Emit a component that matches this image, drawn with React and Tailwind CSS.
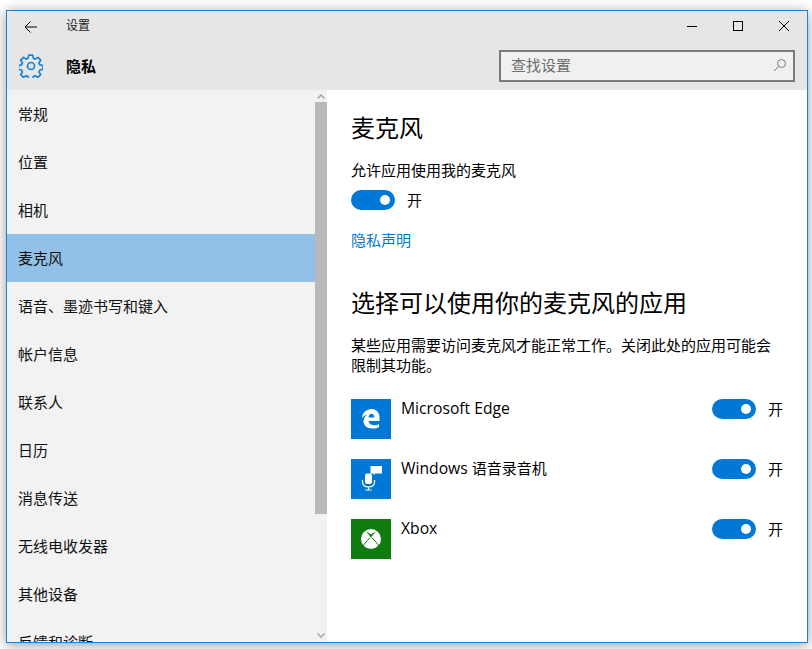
import React from 'react'

const FONT = "font-['Open_Sans','Noto_Sans_CJK_SC',sans-serif]"

const menuItems = ['常规', '位置', '相机', '麦克风', '语音、墨迹书写和键入', '帐户信息', '联系人', '日历', '消息传送', '无线电收发器', '其他设备', '反馈和诊断']

const Toggle = () => (
  <div className='flex items-center'>
    <div className='w-11 h-5 rounded-full bg-[#0078d7] flex items-center justify-end pr-[5px]'>
      <div className='w-2.5 h-2.5 rounded-full bg-white'></div>
    </div>
    <span className='ml-3 text-[15px] leading-5 text-black'>开</span>
  </div>
)

const EdgeIcon = () => (
  <svg viewBox='0 0 40 40' className='w-10 h-10'>
    <rect width='40' height='40' fill='#0078d7' />
    <path
      d='M11 19C11.500 13.500 15.500 10 20.500 10C25.500 10 28.500 14 28.500 18.500V22H17.500C18 25 20.500 26.300 23.500 26.300C25 26.300 27 25.800 28 25V28C26.500 29 24.500 29.500 22 29.500C15.500 29.500 12 26 12.500 21.500C13 18.500 14.500 16.500 16.500 15.500C14.500 16 12.500 17 11 19zM17.500 18.500H23.300C23.300 16 22 14.800 20.500 14.800C19 14.800 17.800 16.300 17.500 18.500z'
      fill='#fff'
      fillRule='evenodd'
    />
  </svg>
)

const RecorderIcon = () => (
  <svg viewBox='0 0 40 40' className='w-10 h-10'>
    <rect width='40' height='40' fill='#0078d7' />
    <path d='M19.500 7h11.500v7.500h-6.500l-2 1.500v-1.500h-3z' fill='#fff' />
    <rect x='14' y='14.500' width='7' height='10.500' rx='2' fill='#fff' />
    <path d='M11.500 21v2c0 3.300 2.500 5 6 5s6-1.700 6-5v-2M17.500 28v3M14.500 31h6' fill='none' stroke='#fff' strokeWidth='1.200' />
  </svg>
)

const XboxIcon = () => (
  <svg viewBox='0 0 40 40' className='w-10 h-10'>
    <rect width='40' height='40' fill='#107c10' />
    <circle cx='20' cy='20' r='10' fill='#fff' />
    <path d='M15 12.500Q17.500 13.500 20 15.500Q22.500 13.500 25 12.500Q22 15.500 20 19Q18 15.500 15 12.500z' fill='#107c10' />
    <path d='M19 19C16 21.500 13.500 24.500 12 27.500M21 19C24 21.500 26.500 24.500 28 27.500' fill='none' stroke='#107c10' strokeWidth='1' />
  </svg>
)

const GearIcon = () => (
  <svg viewBox='0 0 24 24' className='w-6 h-6' fill='none' stroke='#1883d7' strokeWidth='1.700' strokeLinejoin='round'>
    <circle cx='12' cy='12' r='3.500' />
    <path d='M10 1.500h4l.6 3 2 .9 2.600-1.700 2.800 2.800-1.700 2.600.9 2 3 .6v4l-3 .6-.9 2 1.700 2.600-2.800 2.800-2.600-1.700-2 .9-.6 3h-4l-.6-3-2-.9-2.600 1.700-2.800-2.800 1.700-2.600-.9-2-3-.6v-4l3-.6.9-2-1.700-2.600 2.800-2.800 2.600 1.700 2-.9z' transform='translate(-.3 -.3)' />
  </svg>
)

const apps = [
  { latin: 'Microsoft Edge', icon: <EdgeIcon /> },
  { latin: 'Windows ', cjk: '语音录音机', icon: <RecorderIcon /> },
  { latin: 'Xbox', icon: <XboxIcon /> },
]

const App = () => {
  return (
    <div className={`w-[812px] h-[649px] overflow-hidden bg-white pl-[6px] pt-[10px] ${FONT}`}>
      <div className='w-[802px] h-[633px] border border-[#1883d7] flex flex-col shadow-[0_2px_12px_rgba(0,0,0,0.4)] bg-white'>
        {/* Title bar */}
        <div className='h-[79px] bg-[#e6e6e6] shrink-0'>
          <div className='h-[30px] flex items-center'>
            <div className='w-12 flex justify-center pt-[1px] pr-[1px]'>
              <svg viewBox='0 0 14 14' className='w-3.5 h-3.5' fill='none' stroke='#000' strokeWidth='1'>
                <path d='M13 7H1M6.500 1.500 1 7l5.500 5.500' />
              </svg>
            </div>
            <span className='ml-[11px] text-xs text-[#222]'>设置</span>
            <div className='ml-auto flex'>
              <div className='w-[46px] h-[30px] flex items-center justify-center'>
                <div className='w-2.5 h-px bg-black'></div>
              </div>
              <div className='w-[46px] h-[30px] flex items-center justify-center'>
                <div className='w-2.5 h-2.5 border border-black'></div>
              </div>
              <div className='w-[46px] h-[30px] flex items-center justify-center'>
                <svg viewBox='0 0 10 10' className='w-2.5 h-2.5' fill='none' stroke='#000' strokeWidth='1'>
                  <path d='M0 0l10 10M10 0 0 10' />
                </svg>
              </div>
            </div>
          </div>
          <div className='h-[49px] flex items-start'>
            <div className='w-12 h-[31px] mt-[9px] flex items-center justify-center'>
              <GearIcon />
            </div>
            <span className='ml-[11px] mt-[15px] text-[15px] leading-5 font-bold text-black'>隐私</span>
            <div className='ml-auto mr-[12px] mt-[9px] w-[296px] h-[32px] border-2 border-[#7a7a7a] bg-[#f0f0f0] flex items-center pl-[10px] pr-[6px] pb-[2px]'>
              <span className='text-[15px] leading-5 text-[#6d6d6d]'>查找设置</span>
              <svg viewBox='0 0 14 14' className='ml-auto w-3.5 h-3.5' fill='none' stroke='#7a7a7a' strokeWidth='1'>
                <circle cx='8.500' cy='5.500' r='4' />
                <path d='M5.500 8.500 1 13' />
              </svg>
            </div>
          </div>
        </div>

        <div className='flex flex-1 min-h-0'>
          {/* Sidebar */}
          <div className='w-[320px] bg-[#f2f2f2] flex overflow-hidden'>
            <div className='w-[308px]'>
              {menuItems.map((item) => (
                <div
                  key={item}
                  className={`h-12 shrink-0 flex items-center pl-[11px] text-[15px] text-[#111] ${item === '麦克风' ? 'bg-[#91c1e8]' : ''}`}
                >
                  {item}
                </div>
              ))}
            </div>
            <div className='w-3 flex flex-col items-center'>
              <div className='h-3 flex items-center justify-center'>
                <svg viewBox='0 0 8 5' className='w-2 h-[5px]' fill='none' stroke='#a6a6a6' strokeWidth='1.500'>
                  <path d='M.5 4.500 4 1l3.500 3.500' />
                </svg>
              </div>
              <div className='w-3 h-[412px] bg-[#b9b9b9]'></div>
              <div className='mt-auto h-[14px] flex items-center justify-center'>
                <svg viewBox='0 0 8 5' className='w-2 h-[5px]' fill='none' stroke='#a6a6a6' strokeWidth='1.500'>
                  <path d='M.5.5 4 4 7.500.5' />
                </svg>
              </div>
            </div>
          </div>

          {/* Content */}
          <div className='flex-1 pl-6 pr-6 text-black'>
            <h1 className='mt-[22px] text-2xl leading-8'>麦克风</h1>
            <p className='mt-[16px] text-[15px] leading-5'>允许应用使用我的麦克风</p>
            <div className='mt-[10px]'><Toggle /></div>
            <a className='block mt-[20px] text-[15px] leading-5 text-[#0078d7]'>隐私声明</a>
            <h2 className='mt-[37px] text-2xl leading-8'>选择可以使用你的麦克风的应用</h2>
            <p className='mt-[16px] text-[15px] leading-5 w-[430px]'>某些应用需要访问麦克风才能正常工作。关闭此处的应用可能会限制其功能。</p>
            <div className='mt-[24px] flex flex-col gap-5'>
              {apps.map((app) => (
                <div key={app.latin} className='flex items-start h-10'>
                  {app.icon}
                  <span className='ml-[10px] text-[15px] leading-5 -mt-px'>
                    <span className='text-[15.7px]'>{app.latin}</span>
                    {app.cjk}
                  </span>
                  <div className='ml-auto'><Toggle /></div>
                </div>
              ))}
            </div>
          </div>
        </div>
      </div>
    </div>
  )
}

export default App
